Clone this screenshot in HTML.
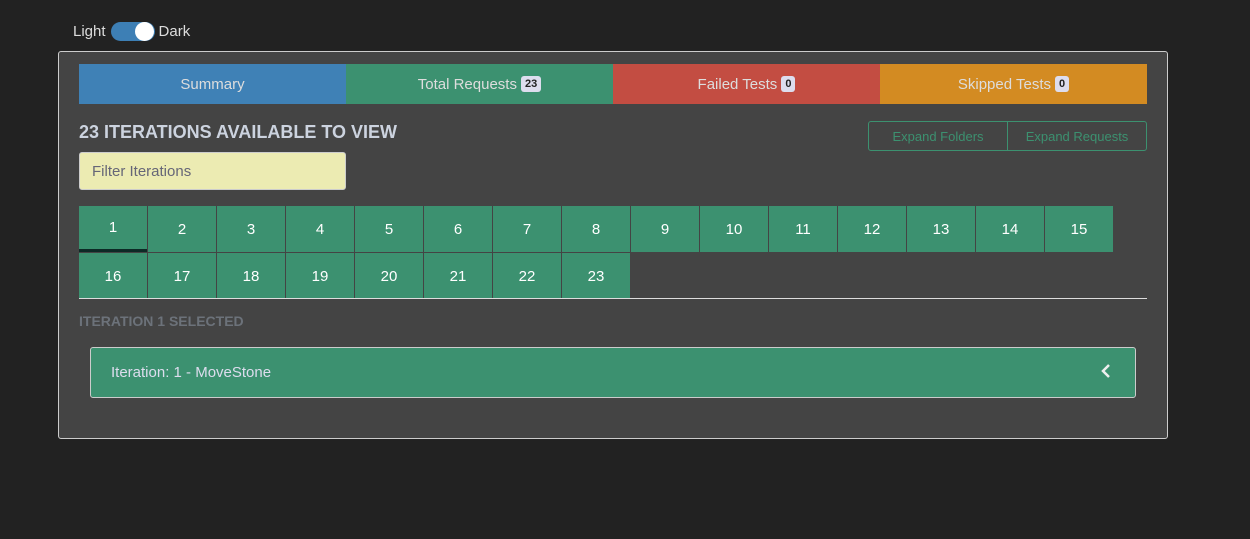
<!DOCTYPE html>
<html><head><style>
*{box-sizing:border-box;margin:0;padding:0}
body{width:1250px;height:539px;background:#222;font-family:"Liberation Sans",sans-serif;position:relative;overflow:hidden}
.abs{position:absolute}
.tog{left:73px;top:22px;color:#ddd;font-size:15px;display:flex;align-items:center;height:18px}
.sw{width:44px;height:19px;background:#3d7fb5;border-radius:10px;margin:0 4px 0 5px;position:relative}
.sw:after{content:"";position:absolute;right:1px;top:0;width:19px;height:19px;border-radius:50%;background:#fff}
.card{left:58px;top:51px;width:1110px;height:388px;background:#444;border:1px solid #ccc;border-radius:3px}
.tab{top:64px;height:40px;width:267px;color:#ddd;font-size:15px;display:flex;align-items:center;justify-content:center}
.bd{background:#dde;color:#222;font-size:11px;font-weight:bold;padding:2px 4px;border-radius:3px;margin-left:4px}
h2{left:79px;top:122px;color:#ccd3df;font-size:18px;font-weight:bold}
.filter{left:79px;top:152px;width:267px;height:38px;background:#ecebb2;border:1px solid #ccc;border-radius:3px;color:#667;font-size:15px;padding:10px 12px}
.btns{left:868px;top:121px;width:279px;height:30px;border:1px solid #3c9170;border-radius:3px;display:flex;color:#3c9170;font-size:13px}
.btns div{display:flex;align-items:center;justify-content:center}
.t{width:68px;height:46px;background:#3c9170;color:#fff;font-size:15px;display:flex;align-items:center;justify-content:center}
.sel{left:79px;top:313px;color:#6c727a;font-size:14px;font-weight:bold}
.it{left:90px;top:347px;width:1046px;height:51px;background:#3c9170;border:1px solid #ccc;border-radius:3px;color:#dde;font-size:15px;padding:16px 20px}
</style></head><body>
<div class="abs tog">Light<div class="sw"></div>Dark</div>
<div class="abs card"></div>
<div class="abs tab" style="left:79px;background:#3f81b6">Summary</div>
<div class="abs tab" style="left:346px;background:#3c9170">Total Requests<span class="bd">23</span></div>
<div class="abs tab" style="left:613px;background:#c34d42">Failed Tests<span class="bd">0</span></div>
<div class="abs tab" style="left:880px;background:#d38b22">Skipped Tests<span class="bd">0</span></div>
<div class="abs" style="left:79px;top:122px;color:#ccd3df;font-size:18px;font-weight:bold">23 ITERATIONS AVAILABLE TO VIEW</div>
<div class="abs filter">Filter Iterations</div>
<div class="abs btns"><div style="width:139px;border-right:1px solid #3c9170">Expand Folders</div><div style="flex:1">Expand Requests</div></div>
<div class="abs t" style="left:79px;top:206px;border-bottom:3px solid #0d2a26">1</div>
<div class="abs t" style="left:148px;top:206px">2</div>
<div class="abs t" style="left:217px;top:206px">3</div>
<div class="abs t" style="left:286px;top:206px">4</div>
<div class="abs t" style="left:355px;top:206px">5</div>
<div class="abs t" style="left:424px;top:206px">6</div>
<div class="abs t" style="left:493px;top:206px">7</div>
<div class="abs t" style="left:562px;top:206px">8</div>
<div class="abs t" style="left:631px;top:206px">9</div>
<div class="abs t" style="left:700px;top:206px">10</div>
<div class="abs t" style="left:769px;top:206px">11</div>
<div class="abs t" style="left:838px;top:206px">12</div>
<div class="abs t" style="left:907px;top:206px">13</div>
<div class="abs t" style="left:976px;top:206px">14</div>
<div class="abs t" style="left:1045px;top:206px">15</div>
<div class="abs t" style="left:79px;top:253px">16</div>
<div class="abs t" style="left:148px;top:253px">17</div>
<div class="abs t" style="left:217px;top:253px">18</div>
<div class="abs t" style="left:286px;top:253px">19</div>
<div class="abs t" style="left:355px;top:253px">20</div>
<div class="abs t" style="left:424px;top:253px">21</div>
<div class="abs t" style="left:493px;top:253px">22</div>
<div class="abs t" style="left:562px;top:253px">23</div>
<div class="abs" style="left:79px;top:298px;width:1068px;height:1px;background:#ddd"></div>
<div class="abs sel">ITERATION 1 SELECTED</div>
<div class="abs it">Iteration: 1 - MoveStone</div>
<svg class="abs" style="left:1100px;top:364px" width="12" height="14"><path d="M9 1 L3 7 L9 13" stroke="#eee" stroke-width="2.5" fill="none"/></svg>
</body></html>
